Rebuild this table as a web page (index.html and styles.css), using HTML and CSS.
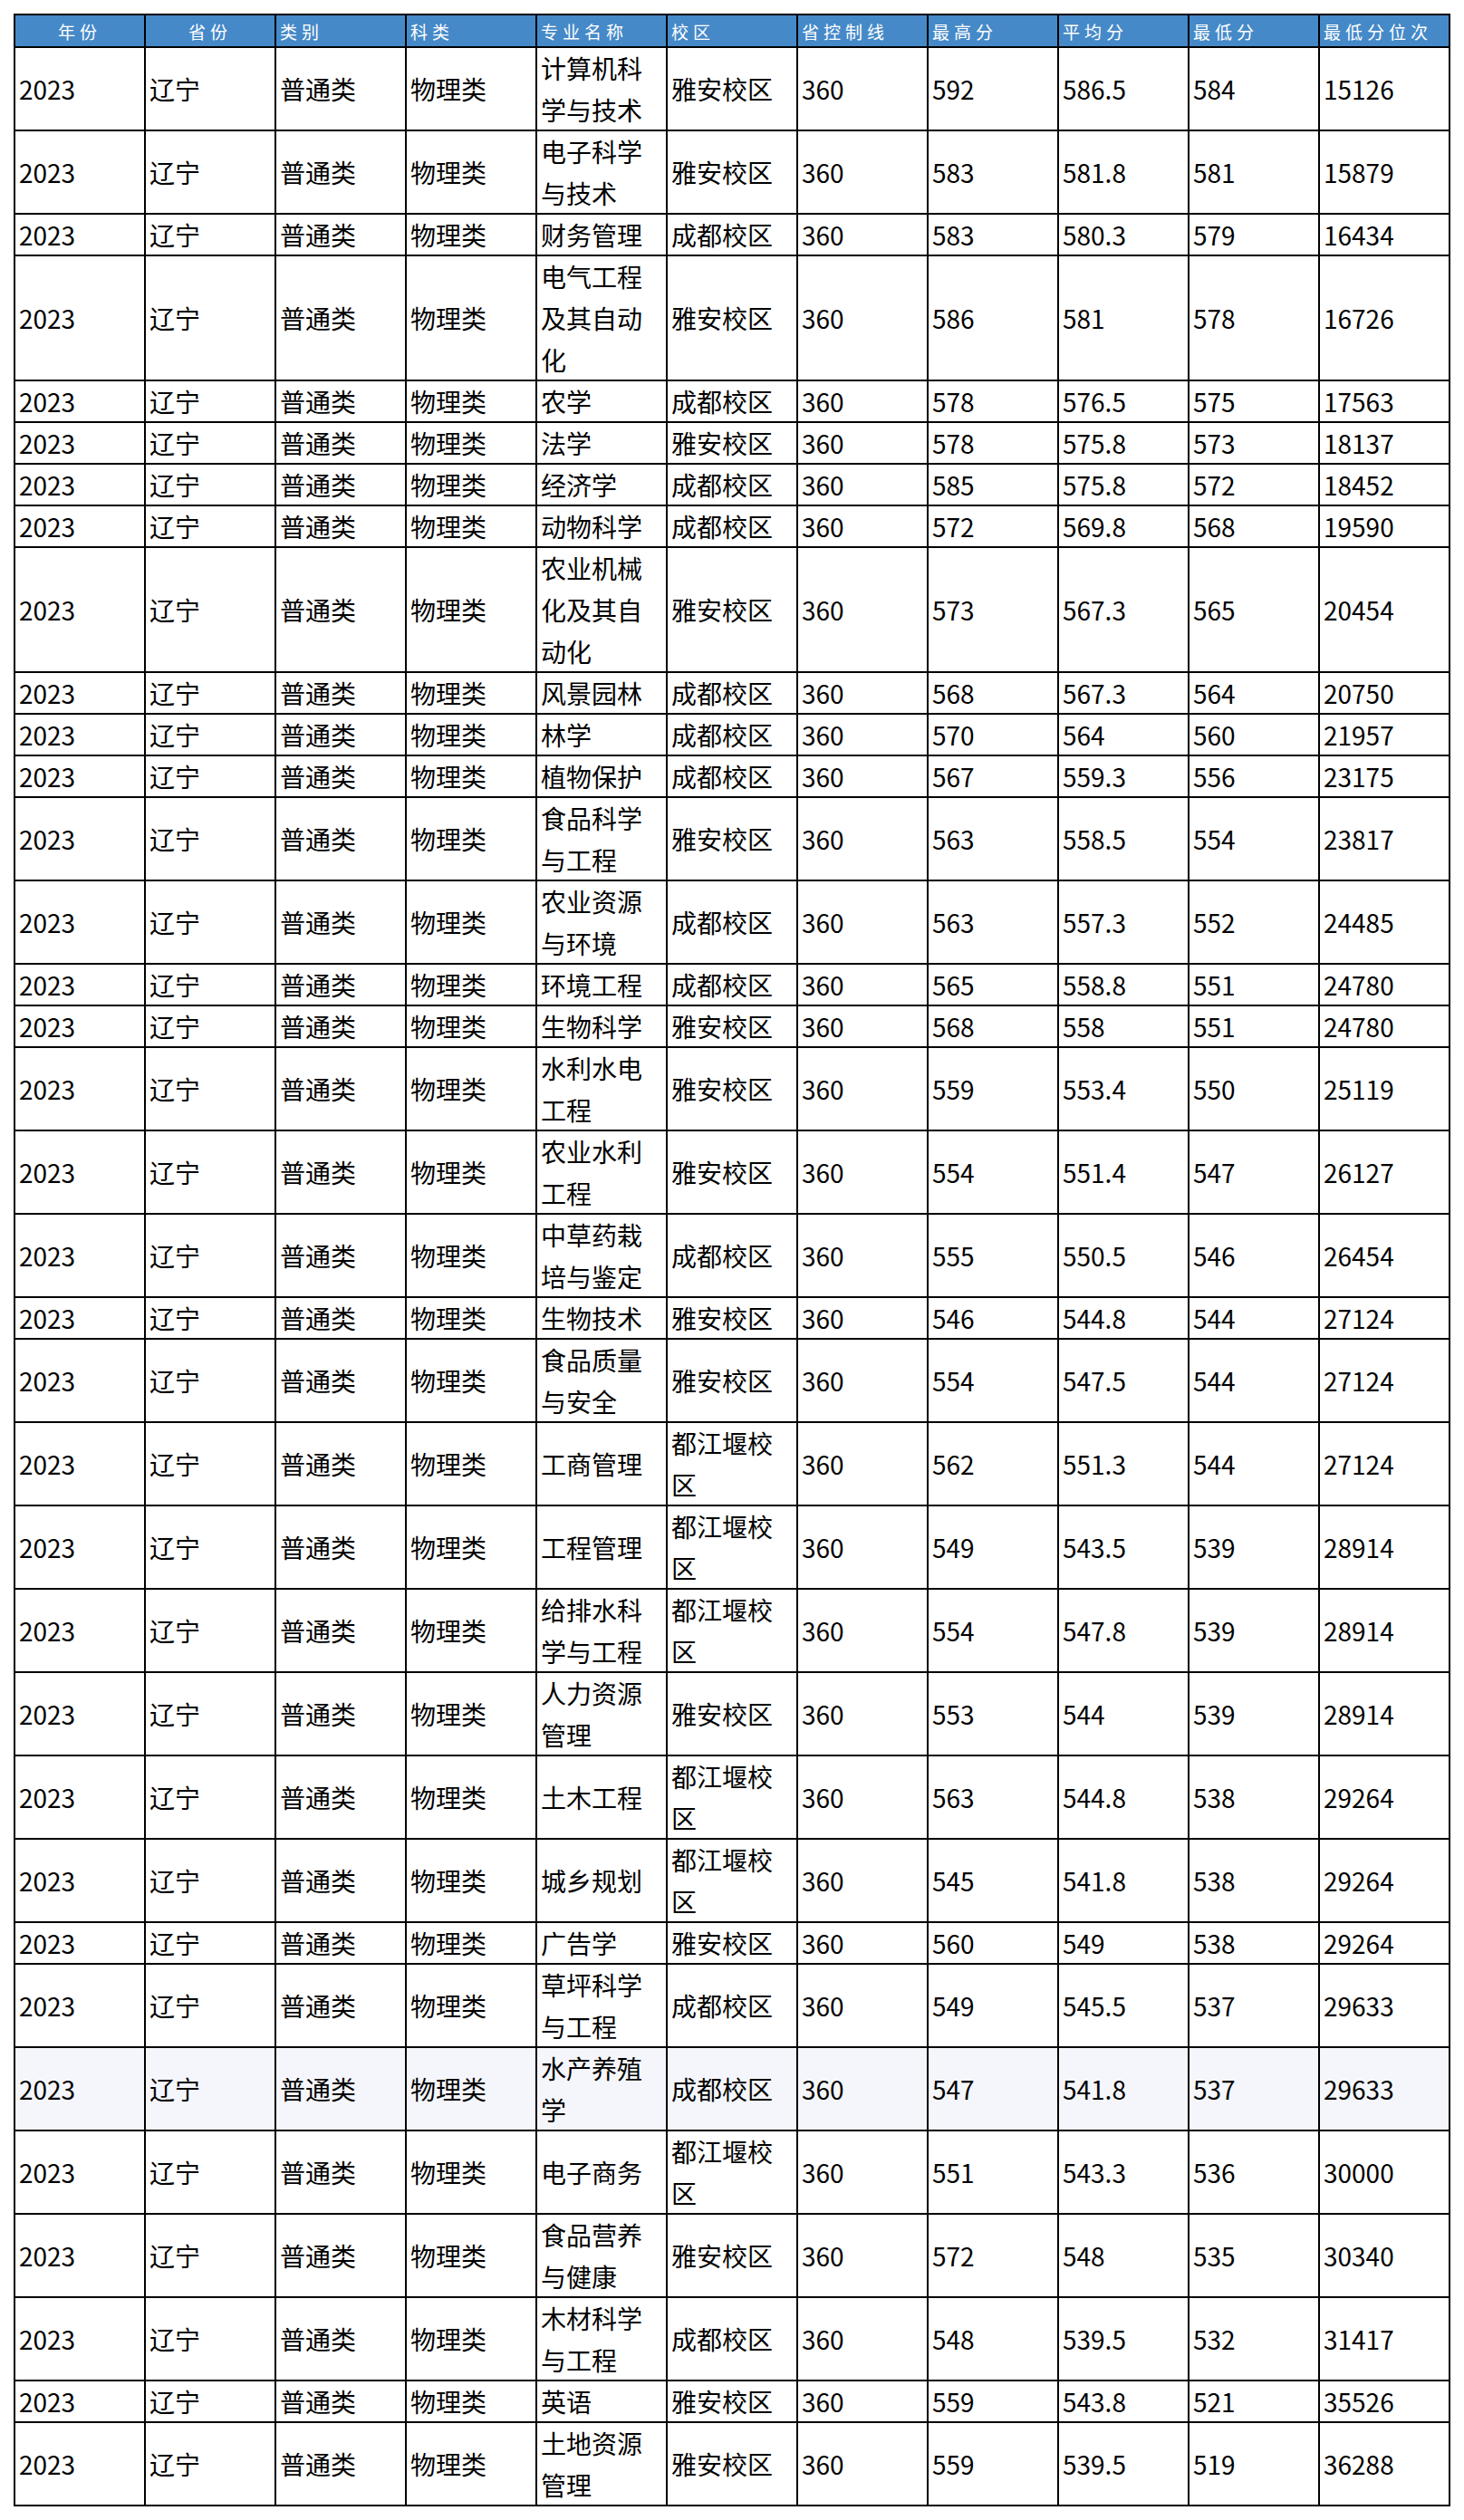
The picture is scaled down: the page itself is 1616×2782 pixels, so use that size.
FILE: index.html
```html
<!DOCTYPE html>
<html lang="zh-CN">
<head>
<meta charset="utf-8">
<title>录取分数</title>
<link rel="stylesheet" href="styles.css">
</head>
<body>
<table class="scores">
<thead>
<tr><th class="center">年份</th><th class="center">省份</th><th>类别</th><th>科类</th><th>专业名称</th><th>校区</th><th>省控制线</th><th>最高分</th><th>平均分</th><th>最低分</th><th>最低分位次</th></tr>
</thead>
<tbody>
<tr><td><div class="c">2023</div></td><td><div class="c">辽宁</div></td><td><div class="c">普通类</div></td><td><div class="c">物理类</div></td><td><div class="c">计算机科学与技术</div></td><td><div class="c">雅安校区</div></td><td><div class="c">360</div></td><td><div class="c">592</div></td><td><div class="c">586.5</div></td><td><div class="c">584</div></td><td><div class="c">15126</div></td></tr>
<tr><td><div class="c">2023</div></td><td><div class="c">辽宁</div></td><td><div class="c">普通类</div></td><td><div class="c">物理类</div></td><td><div class="c">电子科学与技术</div></td><td><div class="c">雅安校区</div></td><td><div class="c">360</div></td><td><div class="c">583</div></td><td><div class="c">581.8</div></td><td><div class="c">581</div></td><td><div class="c">15879</div></td></tr>
<tr><td><div class="c">2023</div></td><td><div class="c">辽宁</div></td><td><div class="c">普通类</div></td><td><div class="c">物理类</div></td><td><div class="c">财务管理</div></td><td><div class="c">成都校区</div></td><td><div class="c">360</div></td><td><div class="c">583</div></td><td><div class="c">580.3</div></td><td><div class="c">579</div></td><td><div class="c">16434</div></td></tr>
<tr><td><div class="c">2023</div></td><td><div class="c">辽宁</div></td><td><div class="c">普通类</div></td><td><div class="c">物理类</div></td><td><div class="c">电气工程及其自动化</div></td><td><div class="c">雅安校区</div></td><td><div class="c">360</div></td><td><div class="c">586</div></td><td><div class="c">581</div></td><td><div class="c">578</div></td><td><div class="c">16726</div></td></tr>
<tr><td><div class="c">2023</div></td><td><div class="c">辽宁</div></td><td><div class="c">普通类</div></td><td><div class="c">物理类</div></td><td><div class="c">农学</div></td><td><div class="c">成都校区</div></td><td><div class="c">360</div></td><td><div class="c">578</div></td><td><div class="c">576.5</div></td><td><div class="c">575</div></td><td><div class="c">17563</div></td></tr>
<tr><td><div class="c">2023</div></td><td><div class="c">辽宁</div></td><td><div class="c">普通类</div></td><td><div class="c">物理类</div></td><td><div class="c">法学</div></td><td><div class="c">雅安校区</div></td><td><div class="c">360</div></td><td><div class="c">578</div></td><td><div class="c">575.8</div></td><td><div class="c">573</div></td><td><div class="c">18137</div></td></tr>
<tr><td><div class="c">2023</div></td><td><div class="c">辽宁</div></td><td><div class="c">普通类</div></td><td><div class="c">物理类</div></td><td><div class="c">经济学</div></td><td><div class="c">成都校区</div></td><td><div class="c">360</div></td><td><div class="c">585</div></td><td><div class="c">575.8</div></td><td><div class="c">572</div></td><td><div class="c">18452</div></td></tr>
<tr><td><div class="c">2023</div></td><td><div class="c">辽宁</div></td><td><div class="c">普通类</div></td><td><div class="c">物理类</div></td><td><div class="c">动物科学</div></td><td><div class="c">成都校区</div></td><td><div class="c">360</div></td><td><div class="c">572</div></td><td><div class="c">569.8</div></td><td><div class="c">568</div></td><td><div class="c">19590</div></td></tr>
<tr><td><div class="c">2023</div></td><td><div class="c">辽宁</div></td><td><div class="c">普通类</div></td><td><div class="c">物理类</div></td><td><div class="c">农业机械化及其自动化</div></td><td><div class="c">雅安校区</div></td><td><div class="c">360</div></td><td><div class="c">573</div></td><td><div class="c">567.3</div></td><td><div class="c">565</div></td><td><div class="c">20454</div></td></tr>
<tr><td><div class="c">2023</div></td><td><div class="c">辽宁</div></td><td><div class="c">普通类</div></td><td><div class="c">物理类</div></td><td><div class="c">风景园林</div></td><td><div class="c">成都校区</div></td><td><div class="c">360</div></td><td><div class="c">568</div></td><td><div class="c">567.3</div></td><td><div class="c">564</div></td><td><div class="c">20750</div></td></tr>
<tr><td><div class="c">2023</div></td><td><div class="c">辽宁</div></td><td><div class="c">普通类</div></td><td><div class="c">物理类</div></td><td><div class="c">林学</div></td><td><div class="c">成都校区</div></td><td><div class="c">360</div></td><td><div class="c">570</div></td><td><div class="c">564</div></td><td><div class="c">560</div></td><td><div class="c">21957</div></td></tr>
<tr><td><div class="c">2023</div></td><td><div class="c">辽宁</div></td><td><div class="c">普通类</div></td><td><div class="c">物理类</div></td><td><div class="c">植物保护</div></td><td><div class="c">成都校区</div></td><td><div class="c">360</div></td><td><div class="c">567</div></td><td><div class="c">559.3</div></td><td><div class="c">556</div></td><td><div class="c">23175</div></td></tr>
<tr><td><div class="c">2023</div></td><td><div class="c">辽宁</div></td><td><div class="c">普通类</div></td><td><div class="c">物理类</div></td><td><div class="c">食品科学与工程</div></td><td><div class="c">雅安校区</div></td><td><div class="c">360</div></td><td><div class="c">563</div></td><td><div class="c">558.5</div></td><td><div class="c">554</div></td><td><div class="c">23817</div></td></tr>
<tr><td><div class="c">2023</div></td><td><div class="c">辽宁</div></td><td><div class="c">普通类</div></td><td><div class="c">物理类</div></td><td><div class="c">农业资源与环境</div></td><td><div class="c">成都校区</div></td><td><div class="c">360</div></td><td><div class="c">563</div></td><td><div class="c">557.3</div></td><td><div class="c">552</div></td><td><div class="c">24485</div></td></tr>
<tr><td><div class="c">2023</div></td><td><div class="c">辽宁</div></td><td><div class="c">普通类</div></td><td><div class="c">物理类</div></td><td><div class="c">环境工程</div></td><td><div class="c">成都校区</div></td><td><div class="c">360</div></td><td><div class="c">565</div></td><td><div class="c">558.8</div></td><td><div class="c">551</div></td><td><div class="c">24780</div></td></tr>
<tr><td><div class="c">2023</div></td><td><div class="c">辽宁</div></td><td><div class="c">普通类</div></td><td><div class="c">物理类</div></td><td><div class="c">生物科学</div></td><td><div class="c">雅安校区</div></td><td><div class="c">360</div></td><td><div class="c">568</div></td><td><div class="c">558</div></td><td><div class="c">551</div></td><td><div class="c">24780</div></td></tr>
<tr><td><div class="c">2023</div></td><td><div class="c">辽宁</div></td><td><div class="c">普通类</div></td><td><div class="c">物理类</div></td><td><div class="c">水利水电工程</div></td><td><div class="c">雅安校区</div></td><td><div class="c">360</div></td><td><div class="c">559</div></td><td><div class="c">553.4</div></td><td><div class="c">550</div></td><td><div class="c">25119</div></td></tr>
<tr><td><div class="c">2023</div></td><td><div class="c">辽宁</div></td><td><div class="c">普通类</div></td><td><div class="c">物理类</div></td><td><div class="c">农业水利工程</div></td><td><div class="c">雅安校区</div></td><td><div class="c">360</div></td><td><div class="c">554</div></td><td><div class="c">551.4</div></td><td><div class="c">547</div></td><td><div class="c">26127</div></td></tr>
<tr><td><div class="c">2023</div></td><td><div class="c">辽宁</div></td><td><div class="c">普通类</div></td><td><div class="c">物理类</div></td><td><div class="c">中草药栽培与鉴定</div></td><td><div class="c">成都校区</div></td><td><div class="c">360</div></td><td><div class="c">555</div></td><td><div class="c">550.5</div></td><td><div class="c">546</div></td><td><div class="c">26454</div></td></tr>
<tr><td><div class="c">2023</div></td><td><div class="c">辽宁</div></td><td><div class="c">普通类</div></td><td><div class="c">物理类</div></td><td><div class="c">生物技术</div></td><td><div class="c">雅安校区</div></td><td><div class="c">360</div></td><td><div class="c">546</div></td><td><div class="c">544.8</div></td><td><div class="c">544</div></td><td><div class="c">27124</div></td></tr>
<tr><td><div class="c">2023</div></td><td><div class="c">辽宁</div></td><td><div class="c">普通类</div></td><td><div class="c">物理类</div></td><td><div class="c">食品质量与安全</div></td><td><div class="c">雅安校区</div></td><td><div class="c">360</div></td><td><div class="c">554</div></td><td><div class="c">547.5</div></td><td><div class="c">544</div></td><td><div class="c">27124</div></td></tr>
<tr><td><div class="c">2023</div></td><td><div class="c">辽宁</div></td><td><div class="c">普通类</div></td><td><div class="c">物理类</div></td><td><div class="c">工商管理</div></td><td><div class="c">都江堰校区</div></td><td><div class="c">360</div></td><td><div class="c">562</div></td><td><div class="c">551.3</div></td><td><div class="c">544</div></td><td><div class="c">27124</div></td></tr>
<tr><td><div class="c">2023</div></td><td><div class="c">辽宁</div></td><td><div class="c">普通类</div></td><td><div class="c">物理类</div></td><td><div class="c">工程管理</div></td><td><div class="c">都江堰校区</div></td><td><div class="c">360</div></td><td><div class="c">549</div></td><td><div class="c">543.5</div></td><td><div class="c">539</div></td><td><div class="c">28914</div></td></tr>
<tr><td><div class="c">2023</div></td><td><div class="c">辽宁</div></td><td><div class="c">普通类</div></td><td><div class="c">物理类</div></td><td><div class="c">给排水科学与工程</div></td><td><div class="c">都江堰校区</div></td><td><div class="c">360</div></td><td><div class="c">554</div></td><td><div class="c">547.8</div></td><td><div class="c">539</div></td><td><div class="c">28914</div></td></tr>
<tr><td><div class="c">2023</div></td><td><div class="c">辽宁</div></td><td><div class="c">普通类</div></td><td><div class="c">物理类</div></td><td><div class="c">人力资源管理</div></td><td><div class="c">雅安校区</div></td><td><div class="c">360</div></td><td><div class="c">553</div></td><td><div class="c">544</div></td><td><div class="c">539</div></td><td><div class="c">28914</div></td></tr>
<tr><td><div class="c">2023</div></td><td><div class="c">辽宁</div></td><td><div class="c">普通类</div></td><td><div class="c">物理类</div></td><td><div class="c">土木工程</div></td><td><div class="c">都江堰校区</div></td><td><div class="c">360</div></td><td><div class="c">563</div></td><td><div class="c">544.8</div></td><td><div class="c">538</div></td><td><div class="c">29264</div></td></tr>
<tr><td><div class="c">2023</div></td><td><div class="c">辽宁</div></td><td><div class="c">普通类</div></td><td><div class="c">物理类</div></td><td><div class="c">城乡规划</div></td><td><div class="c">都江堰校区</div></td><td><div class="c">360</div></td><td><div class="c">545</div></td><td><div class="c">541.8</div></td><td><div class="c">538</div></td><td><div class="c">29264</div></td></tr>
<tr><td><div class="c">2023</div></td><td><div class="c">辽宁</div></td><td><div class="c">普通类</div></td><td><div class="c">物理类</div></td><td><div class="c">广告学</div></td><td><div class="c">雅安校区</div></td><td><div class="c">360</div></td><td><div class="c">560</div></td><td><div class="c">549</div></td><td><div class="c">538</div></td><td><div class="c">29264</div></td></tr>
<tr><td><div class="c">2023</div></td><td><div class="c">辽宁</div></td><td><div class="c">普通类</div></td><td><div class="c">物理类</div></td><td><div class="c">草坪科学与工程</div></td><td><div class="c">成都校区</div></td><td><div class="c">360</div></td><td><div class="c">549</div></td><td><div class="c">545.5</div></td><td><div class="c">537</div></td><td><div class="c">29633</div></td></tr>
<tr class="hover"><td><div class="c">2023</div></td><td><div class="c">辽宁</div></td><td><div class="c">普通类</div></td><td><div class="c">物理类</div></td><td><div class="c">水产养殖学</div></td><td><div class="c">成都校区</div></td><td><div class="c">360</div></td><td><div class="c">547</div></td><td><div class="c">541.8</div></td><td><div class="c">537</div></td><td><div class="c">29633</div></td></tr>
<tr><td><div class="c">2023</div></td><td><div class="c">辽宁</div></td><td><div class="c">普通类</div></td><td><div class="c">物理类</div></td><td><div class="c">电子商务</div></td><td><div class="c">都江堰校区</div></td><td><div class="c">360</div></td><td><div class="c">551</div></td><td><div class="c">543.3</div></td><td><div class="c">536</div></td><td><div class="c">30000</div></td></tr>
<tr><td><div class="c">2023</div></td><td><div class="c">辽宁</div></td><td><div class="c">普通类</div></td><td><div class="c">物理类</div></td><td><div class="c">食品营养与健康</div></td><td><div class="c">雅安校区</div></td><td><div class="c">360</div></td><td><div class="c">572</div></td><td><div class="c">548</div></td><td><div class="c">535</div></td><td><div class="c">30340</div></td></tr>
<tr><td><div class="c">2023</div></td><td><div class="c">辽宁</div></td><td><div class="c">普通类</div></td><td><div class="c">物理类</div></td><td><div class="c">木材科学与工程</div></td><td><div class="c">成都校区</div></td><td><div class="c">360</div></td><td><div class="c">548</div></td><td><div class="c">539.5</div></td><td><div class="c">532</div></td><td><div class="c">31417</div></td></tr>
<tr><td><div class="c">2023</div></td><td><div class="c">辽宁</div></td><td><div class="c">普通类</div></td><td><div class="c">物理类</div></td><td><div class="c">英语</div></td><td><div class="c">雅安校区</div></td><td><div class="c">360</div></td><td><div class="c">559</div></td><td><div class="c">543.8</div></td><td><div class="c">521</div></td><td><div class="c">35526</div></td></tr>
<tr><td><div class="c">2023</div></td><td><div class="c">辽宁</div></td><td><div class="c">普通类</div></td><td><div class="c">物理类</div></td><td><div class="c">土地资源管理</div></td><td><div class="c">雅安校区</div></td><td><div class="c">360</div></td><td><div class="c">559</div></td><td><div class="c">539.5</div></td><td><div class="c">519</div></td><td><div class="c">36288</div></td></tr>
</tbody>
</table>
</body>
</html>
```

FILE: styles.css
```css
html, body {
  margin: 0;
  padding: 0;
  background: #ffffff;
}

body {
  font-family: "Noto Sans CJK SC", "Noto Sans", sans-serif;
  color: #000000;
}

.scores {
  margin: 15px 0 0 15px;
  border-collapse: separate;
  border-spacing: 0;
  table-layout: fixed;
  width: 1586px;
  border-top: 2px solid #000;
  border-left: 2px solid #000;
}

.scores th,
.scores td {
  box-sizing: border-box;
  width: 144px;
  border-right: 2px solid #000;
  border-bottom: 2px solid #000;
  padding: 0 0 0 4px;
  text-align: left;
  vertical-align: middle;
}

.scores th {
  background: #4589c8;
  color: #ffffff;
  font-family: "Noto Sans CJK SC", sans-serif;
  font-weight: 400;
  font-size: 19px;
  letter-spacing: 5px;
  height: 36px;
  line-height: 32px;
  padding-top: 2px;
}

.scores th.center {
  text-align: center;
  padding-left: 0;
}

.scores td {
  font-size: 28px;
  line-height: 46px;
  word-break: break-all;
}

.scores td .c {
  margin: -1px 0;
}

.scores tr.hover td {
  background: #f5f6fb;
}
```
